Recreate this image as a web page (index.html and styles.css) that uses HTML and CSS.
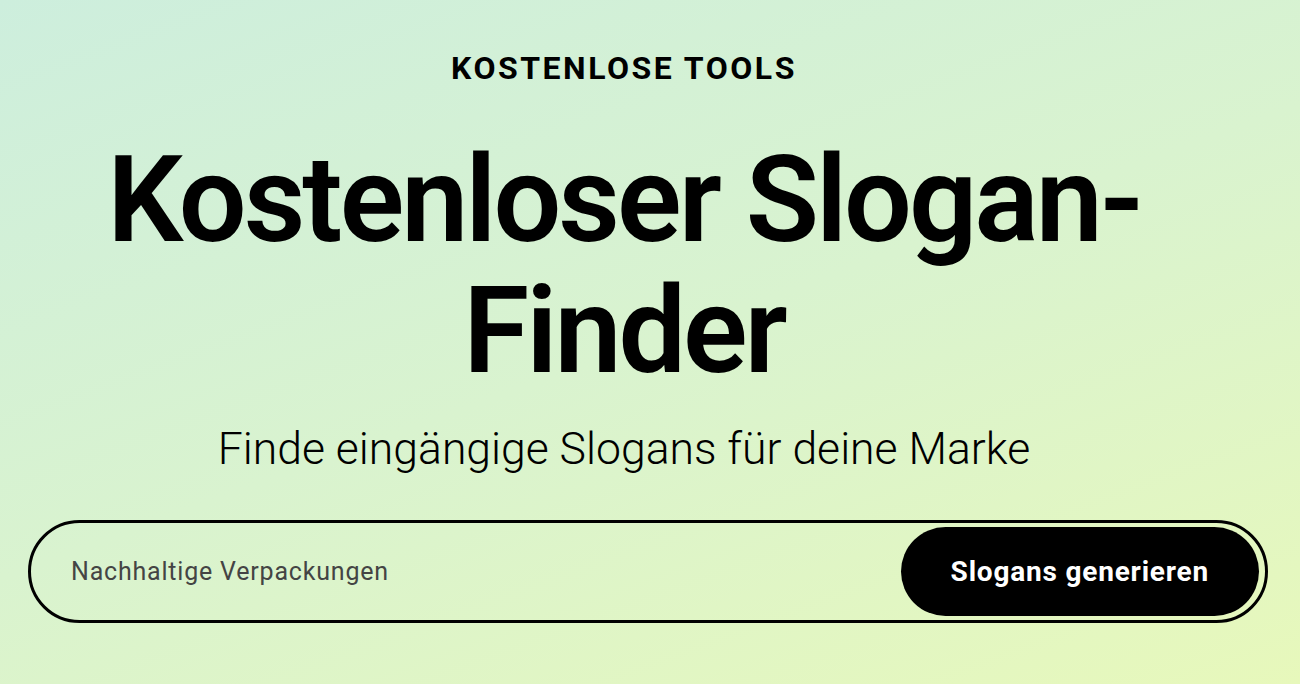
FILE: index.html
```html
<!DOCTYPE html>
<html lang="de">
<head>
    <meta charset="UTF-8">
    <meta name="viewport" content="width=device-width, initial-scale=1.0">
    <title>Kostenloser Slogan-Finder</title>
    <link rel="stylesheet" href="styles.css">
</head>
<body>
    <!-- Hero -->
    <section class="hero">
        <div class="hero-text">
            <p class="eyebrow">Kostenlose Tools</p>
            <h1 class="hero-title">Kostenloser Slogan-Finder</h1>
            <p class="hero-sub">Finde eingängige Slogans für deine Marke</p>
        </div>

        <form class="slogan-form" onsubmit="return false;">
            <input class="slogan-input" type="text" placeholder="Nachhaltige Verpackungen">
            <button class="slogan-btn" type="submit">Slogans generieren</button>
        </form>
    </section>
</body>
</html>
```

FILE: styles.css
```css
/* Reset */
body, html {
    margin: 0;
    padding: 0;
    width: 100%;
    height: 100%;
    overflow: hidden;
    font-family: Roboto, 'Liberation Sans', sans-serif;
    color: #000;
}

body {
    background: linear-gradient(160deg, #cdeedd 0%, #d9f3cf 50%, #e7f8bb 100%);
}

/* Hero */
.hero {
    display: flex;
    flex-direction: column;
    align-items: center;
    padding: 46px 32px 0 28px;
}

.hero-text {
    display: flex;
    flex-direction: column;
    align-items: center;
    text-align: center;
    padding-right: 48px;
}

.eyebrow {
    margin: 0;
    font-size: 32px;
    font-weight: 700;
    letter-spacing: 2.5px;
    text-transform: uppercase;
    line-height: 44px;
}

.hero-title {
    margin: 45px 0 0 0;
    max-width: 1100px;
    font-size: 120px;
    font-weight: 600;
    line-height: 131px;
    letter-spacing: -3px;
}

.hero-sub {
    margin: 24px 0 0 0;
    font-size: 44.5px;
    font-weight: 300;
    line-height: 56px;
}

/* Formulário */
.slogan-form {
    display: flex;
    align-items: center;
    box-sizing: border-box;
    width: 100%;
    margin-top: 43px;
    height: 103px;
    padding: 0 6px 0 40px;
    border: 3px solid #000;
    border-radius: 60px;
}

.slogan-input {
    flex: 1;
    border: none;
    background: transparent;
    outline: none;
    font-family: inherit;
    font-size: 25px;
    letter-spacing: 0.8px;
    color: #333;
    padding: 0;
}

.slogan-input::placeholder {
    color: #444;
}

.slogan-btn {
    height: 89px;
    padding: 0 50px;
    background: #000;
    color: #fff;
    border: none;
    border-radius: 50px;
    font-family: inherit;
    font-size: 28px;
    font-weight: 700;
    letter-spacing: 0.8px;
    cursor: pointer;
}
```
